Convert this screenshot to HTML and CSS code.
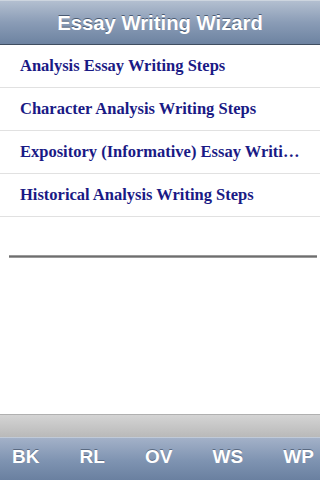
FILE: index.html
```html
<!DOCTYPE HTML>
<html>
<head>
<meta charset="utf-8">
<link rel="stylesheet" href="styles.css">
</head>
<body>
  <div id="page">
    <div class="title-bar">Essay Writing Wizard</div>
    <ul class="steps">
      <li>Analysis Essay Writing Steps</li>
      <li>Character Analysis Writing Steps</li>
      <li>Expository (Informative) Essay Writing Steps</li>
      <li>Historical Analysis Writing Steps</li>
    </ul>
    <div class="rule"></div>
    <div class="spacer"></div>
    <div class="shelf"></div>
    <div class="tabs">
      <span>BK</span>
      <span>RL</span>
      <span>OV</span>
      <span>WS</span>
      <span>WP</span>
    </div>
  </div>
</body>
</html>
```

FILE: styles.css
```css
*{
    padding: 0px;
    margin: 0px;
    box-sizing: border-box;
}
body{
    background: #fff;
}
#page{
    width: 320px;
    height: 480px;
    display: flex;
    flex-direction: column;
    overflow: hidden;
}
.title-bar{
    height: 45px;
    text-align: center;
    color: #fff;
    font: bold 20.3px "Liberation Sans", Arial, sans-serif;
    line-height: 44px;
    text-shadow: 0 -1px 0 #4a5a72;
    background: linear-gradient(#b3bfd0, #8a9cb6 50%, #6d83a1);
    border-top: 1px solid #cdd5df;
    border-bottom: 1px solid #3f4d60;
}
.steps{
    list-style: none;
}
.steps li{
    height: 43px;
    padding: 0 17px 0 20px;
    border-bottom: 1px solid #e1e1e1;
    color: #1a1a85;
    font: bold 16.5px "Liberation Serif", "Times New Roman", serif;
    line-height: 42px;
    white-space: nowrap;
    overflow: hidden;
    text-overflow: ellipsis;
}
.rule{
    height: 3px;
    margin: 38px 3px 0 9px;
    border-top: 1px solid #9a9a9a;
    border-bottom: 1px solid #9a9a9a;
    background: #6e6e6e;
}
.spacer{
    flex: 1;
}
.shelf{
    height: 23px;
    background: linear-gradient(#d4d4d4, #c4c4c4 60%, #b9b9b9);
    border-top: 1px solid #b0b0b0;
}
.tabs{
    height: 43px;
    display: flex;
    justify-content: space-between;
    align-items: center;
    padding: 0 6px 4px 12px;
    background: linear-gradient(#a3b1c8, #7e93b1 55%, #6a80a0);
    border-top: 1px solid #c0cad8;
}
.tabs span{
    color: #fff;
    font: bold 19px "Liberation Sans", Arial, sans-serif;
    text-shadow: 0 -1px 0 #5a6a82;
}
```
